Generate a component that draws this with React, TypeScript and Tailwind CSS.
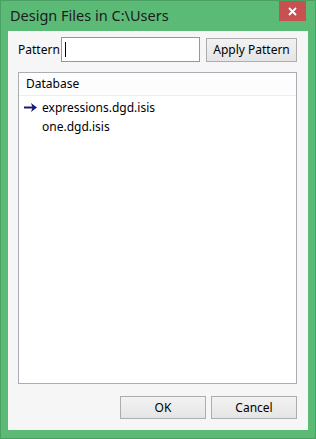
import React from "react";

export default function App() {
  const font = { fontFamily: '"Segoe UI", "Noto Sans", "Open Sans", sans-serif' };
  return (
    <div className="w-[316px] h-[439px] bg-[#5bba76] border border-[#4aa063] flex flex-col" style={font}>
      <div className="h-[30px] flex items-start justify-between shrink-0">
        <div className="pl-[9px] pt-[4px] text-[14.5px] leading-[20px] text-[#1b1b1b]">Design Files in C:\Users</div>
        <div className="w-[27px] h-[20px] bg-[#c75050] mr-[9px] flex items-center justify-center">
          <svg width="9" height="9" viewBox="0 0 9 9">
            <path d="M1 1 L8 8 M8 1 L1 8" stroke="#ffffff" strokeWidth="1.8" />
          </svg>
        </div>
      </div>
      <div className="mx-[7px] h-[399px] bg-[#f6f6f6] flex flex-col text-[12px] text-black">
        <div className="flex items-center mt-[6px] h-[25px] pl-[10px]">
          <span className="w-[43px]">Pattern</span>
          <div className="w-[139px] h-[25px] bg-white border border-[#5bba76] flex items-center pl-[3px]">
            <div className="w-px h-[15px] bg-black" />
          </div>
          <button className="ml-[6px] w-[91px] h-[24px] border border-[#adadad] bg-gradient-to-b from-[#f2f2f2] to-[#e5e5e5] text-[12px] leading-none">
            Apply Pattern
          </button>
        </div>
        <div className="mt-[10px] ml-[10px] w-[279px] h-[312px] bg-white border border-[#acacb4] flex flex-col">
          <div className="h-[23px] flex items-center pl-[7px] border-b border-[#eeeeee] bg-[#fdfdfd]">Database</div>
          <div className="h-[19px] flex items-center pl-[5px] mt-[2px]">
            <svg width="14" height="11" viewBox="0 0 14 11" className="mr-[4px]">
              <path d="M0 5.5 H9" stroke="#1a1a78" strokeWidth="2" />
              <path d="M7 1 L13 5.5 L7 10 L8.5 5.5 Z" fill="#1a1a78" />
            </svg>
            <span>expressions.dgd.isis</span>
          </div>
          <div className="h-[19px] flex items-center pl-[23px]">one.dgd.isis</div>
        </div>
        <div className="flex justify-end gap-[5px] mt-[12px] pr-[11px]">
          <button className="w-[86px] h-[23px] border border-[#adadad] bg-gradient-to-b from-[#f2f2f2] to-[#e5e5e5] text-[12px] leading-none">OK</button>
          <button className="w-[86px] h-[23px] border border-[#adadad] bg-gradient-to-b from-[#f2f2f2] to-[#e5e5e5] text-[12px] leading-none">Cancel</button>
        </div>
      </div>
    </div>
  );
}
